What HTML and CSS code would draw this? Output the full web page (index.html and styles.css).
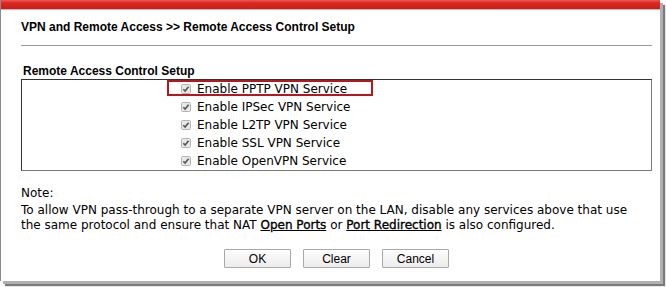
FILE: index.html
```html
<!DOCTYPE html>
<html lang="en">
<head>
  <meta charset="UTF-8">
  <title>Remote Access Control Setup</title>
  <link rel="stylesheet" href="styles.css">
</head>
<body>

  <div class="window">
    <div class="titlebar"></div>

    <div class="content">
      <!-- Caminho da página -->
      <h1 class="page-title">VPN and Remote Access &gt;&gt; Remote Access Control Setup</h1>
      <div class="divider"></div>

      <!-- Serviços -->
      <h2 class="section-title">Remote Access Control Setup</h2>
      <div class="services">
        <div class="highlight"></div>
        <label class="service"><span class="check"><svg width="10" height="10" viewBox="0 0 10 10"><rect x="0.5" y="0.5" width="9" height="9" rx="1" fill="#e8e8e8" stroke="#b4b4b4"/><path d="M2.3 5.2 L4.1 7 L7.6 2.8" fill="none" stroke="#555" stroke-width="1.6"/></svg></span>Enable PPTP VPN Service</label>
        <label class="service"><span class="check"><svg width="10" height="10" viewBox="0 0 10 10"><rect x="0.5" y="0.5" width="9" height="9" rx="1" fill="#e8e8e8" stroke="#b4b4b4"/><path d="M2.3 5.2 L4.1 7 L7.6 2.8" fill="none" stroke="#555" stroke-width="1.6"/></svg></span>Enable IPSec VPN Service</label>
        <label class="service"><span class="check"><svg width="10" height="10" viewBox="0 0 10 10"><rect x="0.5" y="0.5" width="9" height="9" rx="1" fill="#e8e8e8" stroke="#b4b4b4"/><path d="M2.3 5.2 L4.1 7 L7.6 2.8" fill="none" stroke="#555" stroke-width="1.6"/></svg></span>Enable L2TP VPN Service</label>
        <label class="service"><span class="check"><svg width="10" height="10" viewBox="0 0 10 10"><rect x="0.5" y="0.5" width="9" height="9" rx="1" fill="#e8e8e8" stroke="#b4b4b4"/><path d="M2.3 5.2 L4.1 7 L7.6 2.8" fill="none" stroke="#555" stroke-width="1.6"/></svg></span>Enable SSL VPN Service</label>
        <label class="service"><span class="check"><svg width="10" height="10" viewBox="0 0 10 10"><rect x="0.5" y="0.5" width="9" height="9" rx="1" fill="#e8e8e8" stroke="#b4b4b4"/><path d="M2.3 5.2 L4.1 7 L7.6 2.8" fill="none" stroke="#555" stroke-width="1.6"/></svg></span>Enable OpenVPN Service</label>
      </div>

      <!-- Nota -->
      <div class="note">
        <p class="note-title">Note:</p>
        <p>To allow VPN pass-through to a separate VPN server on the LAN, disable any services above that use</p>
        <p>the same protocol and ensure that NAT <a href="#">Open Ports</a> or <a href="#">Port Redirection</a> is also configured.</p>
      </div>

      <!-- Botões -->
      <div class="buttons">
        <button class="btn">OK</button>
        <button class="btn">Clear</button>
        <button class="btn">Cancel</button>
      </div>
    </div>
  </div>

</body>
</html>
```

FILE: styles.css
```css
body {
  margin: 0;
  padding: 0;
  background-color: #ffffff;
  font-family: 'DejaVu Sans', Tahoma, sans-serif;
  color: #000;
  width: 666px;
  height: 287px;
  overflow: hidden;
}

/* Janela */
.window {
  width: 659px;
  height: 281px;
  background-color: #fff;
  border-left: 1px solid #8a8a8a;
  box-shadow: 3px 3px 0 #b0b0b0, 5px 5px 1px #7a7a7a;
}

.titlebar {
  height: 9px;
  background: linear-gradient(#ee5a50, #db2a22 30%, #cc1c15);
  border-bottom: 1px solid #c9b9b8;
}

.content {
  padding: 0 8px 0 20px;
}

/* Títulos */
.page-title {
  font-family: 'Liberation Sans', Arial, sans-serif;
  font-size: 12px;
  font-weight: bold;
  line-height: 15px;
  margin: 0;
  padding-top: 10px;
}

.divider {
  border-top: 1px solid #9a9a9a;
  margin-top: 10px;
}

.section-title {
  font-family: 'Liberation Sans', Arial, sans-serif;
  font-size: 12px;
  font-weight: bold;
  line-height: 15px;
  margin: 18px 0 0 2px;
}

/* Lista de serviços */
.services {
  position: relative;
  border: 1px solid #7a7a7a;
  border-top-color: #333;
  border-left-color: #333;
  padding-left: 159px;
}

.service {
  display: flex;
  align-items: center;
  height: 18px;
  font-size: 12px;
}

.check {
  display: flex;
  width: 10px;
  height: 10px;
  margin-right: 6px;
}

.highlight {
  position: absolute;
  left: 145px;
  top: 0;
  width: 202px;
  height: 12px;
  border: 2px solid #b8161c;
}

/* Nota */
.note {
  margin-top: 15px;
  font-size: 12px;
  line-height: 15px;
}

.note p {
  margin: 0;
  white-space: nowrap;
}

.note-title {
  margin-bottom: 2px !important;
}

.note a {
  color: #000;
  -webkit-text-stroke: 0.35px #000;
}

/* Botões */
.buttons {
  display: flex;
  justify-content: center;
  gap: 12px;
  margin-top: 16px;
}

.btn {
  width: 67px;
  height: 19px;
  padding: 0;
  font-family: 'Liberation Sans', Arial, sans-serif;
  font-size: 12px;
  color: #000;
  background: linear-gradient(#fdfdfd, #ececec);
  border: 1px solid #a9a9a9;
  border-radius: 1px;
}
```
